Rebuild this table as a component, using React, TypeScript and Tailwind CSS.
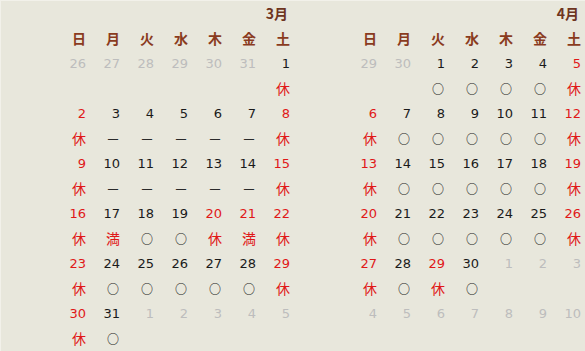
import React from 'react';

type Tone = 'k' | 'r' | 'g';
type Day = { n: number; t: Tone; s?: string };

const WEEK = ['日', '月', '火', '水', '木', '金', '土'];

// 記号: 休(赤) 満(赤) ○ －
const march: Day[][] = [
  [{ n: 26, t: 'g' }, { n: 27, t: 'g' }, { n: 28, t: 'g' }, { n: 29, t: 'g' }, { n: 30, t: 'g' }, { n: 31, t: 'g' }, { n: 1, t: 'k', s: '休' }],
  [{ n: 2, t: 'r', s: '休' }, { n: 3, t: 'k', s: '－' }, { n: 4, t: 'k', s: '－' }, { n: 5, t: 'k', s: '－' }, { n: 6, t: 'k', s: '－' }, { n: 7, t: 'k', s: '－' }, { n: 8, t: 'r', s: '休' }],
  [{ n: 9, t: 'r', s: '休' }, { n: 10, t: 'k', s: '－' }, { n: 11, t: 'k', s: '－' }, { n: 12, t: 'k', s: '－' }, { n: 13, t: 'k', s: '－' }, { n: 14, t: 'k', s: '－' }, { n: 15, t: 'r', s: '休' }],
  [{ n: 16, t: 'r', s: '休' }, { n: 17, t: 'k', s: '満' }, { n: 18, t: 'k', s: '○' }, { n: 19, t: 'k', s: '○' }, { n: 20, t: 'r', s: '休' }, { n: 21, t: 'r', s: '満' }, { n: 22, t: 'r', s: '休' }],
  [{ n: 23, t: 'r', s: '休' }, { n: 24, t: 'k', s: '○' }, { n: 25, t: 'k', s: '○' }, { n: 26, t: 'k', s: '○' }, { n: 27, t: 'k', s: '○' }, { n: 28, t: 'k', s: '○' }, { n: 29, t: 'r', s: '休' }],
  [{ n: 30, t: 'r', s: '休' }, { n: 31, t: 'k', s: '○' }, { n: 1, t: 'g' }, { n: 2, t: 'g' }, { n: 3, t: 'g' }, { n: 4, t: 'g' }, { n: 5, t: 'g' }],
];

const april: Day[][] = [
  [{ n: 29, t: 'g' }, { n: 30, t: 'g' }, { n: 1, t: 'k', s: '○' }, { n: 2, t: 'k', s: '○' }, { n: 3, t: 'k', s: '○' }, { n: 4, t: 'k', s: '○' }, { n: 5, t: 'r', s: '休' }],
  [{ n: 6, t: 'r', s: '休' }, { n: 7, t: 'k', s: '○' }, { n: 8, t: 'k', s: '○' }, { n: 9, t: 'k', s: '○' }, { n: 10, t: 'k', s: '○' }, { n: 11, t: 'k', s: '○' }, { n: 12, t: 'r', s: '休' }],
  [{ n: 13, t: 'r', s: '休' }, { n: 14, t: 'k', s: '○' }, { n: 15, t: 'k', s: '○' }, { n: 16, t: 'k', s: '○' }, { n: 17, t: 'k', s: '○' }, { n: 18, t: 'k', s: '○' }, { n: 19, t: 'r', s: '休' }],
  [{ n: 20, t: 'r', s: '休' }, { n: 21, t: 'k', s: '○' }, { n: 22, t: 'k', s: '○' }, { n: 23, t: 'k', s: '○' }, { n: 24, t: 'k', s: '○' }, { n: 25, t: 'k', s: '○' }, { n: 26, t: 'r', s: '休' }],
  [{ n: 27, t: 'r', s: '休' }, { n: 28, t: 'k', s: '○' }, { n: 29, t: 'r', s: '休' }, { n: 30, t: 'k', s: '○' }, { n: 1, t: 'g' }, { n: 2, t: 'g' }, { n: 3, t: 'g' }],
  [{ n: 4, t: 'g' }, { n: 5, t: 'g' }, { n: 6, t: 'g' }, { n: 7, t: 'g' }, { n: 8, t: 'g' }, { n: 9, t: 'g' }, { n: 10, t: 'g' }],
];

const numColor: Record<Tone, string> = {
  k: 'text-[#1a1a1a]',
  r: 'text-[#e01818]',
  g: 'text-[#bdbdbd]',
};

const Mark: React.FC<{ s?: string }> = ({ s }) => {
  if (!s) return <div />;
  if (s === '○')
    return (
      <div className="font-['Noto_Sans_CJK_JP',sans-serif] text-[12px] font-bold text-[#222] pr-[1px]">○</div>
    );
  const red = s === '休' || s === '満';
  return (
    <div className={`font-['Noto_Sans_CJK_JP',sans-serif] text-[14px] ${red ? 'text-[#e01818]' : 'text-[#2a2a2a]'}`}>
      {s}
    </div>
  );
};

const Month: React.FC<{ title: string; weeks: Day[][] }> = ({ title, weeks }) => (
  <div className="grid grid-cols-[repeat(7,34px)] auto-rows-[25px] items-center text-right">
    <div className="col-span-7 pr-[2px] font-['Noto_Sans_CJK_JP',sans-serif] text-[14px] font-bold text-[#6e3420]">
      {title}
    </div>
    {WEEK.map((w) => (
      <div key={w} className="font-['Noto_Sans_CJK_JP',sans-serif] text-[14px] font-bold text-[#8a3b1e]">
        {w}
      </div>
    ))}
    {weeks.map((week, i) => (
      <React.Fragment key={i}>
        {week.map((d, j) => (
          <div key={'n' + j} className={`font-['DejaVu_Sans',sans-serif] text-[13px] ${numColor[d.t]}`}>
            {d.n}
          </div>
        ))}
        {week.map((d, j) => (
          <Mark key={'s' + j} s={d.s} />
        ))}
      </React.Fragment>
    ))}
  </div>
);

export default function App() {
  return (
    <div className="w-[585px] h-[351px] bg-[#e8e7dc] border-t border-l border-[#f2f1ea] flex overflow-hidden">
      <div className="w-[292px] flex justify-end pr-[3px]">
        <Month title="3月" weeks={march} />
      </div>
      <div className="w-[292px] flex justify-end pr-[4px]">
        <Month title="4月" weeks={april} />
      </div>
    </div>
  );
}
